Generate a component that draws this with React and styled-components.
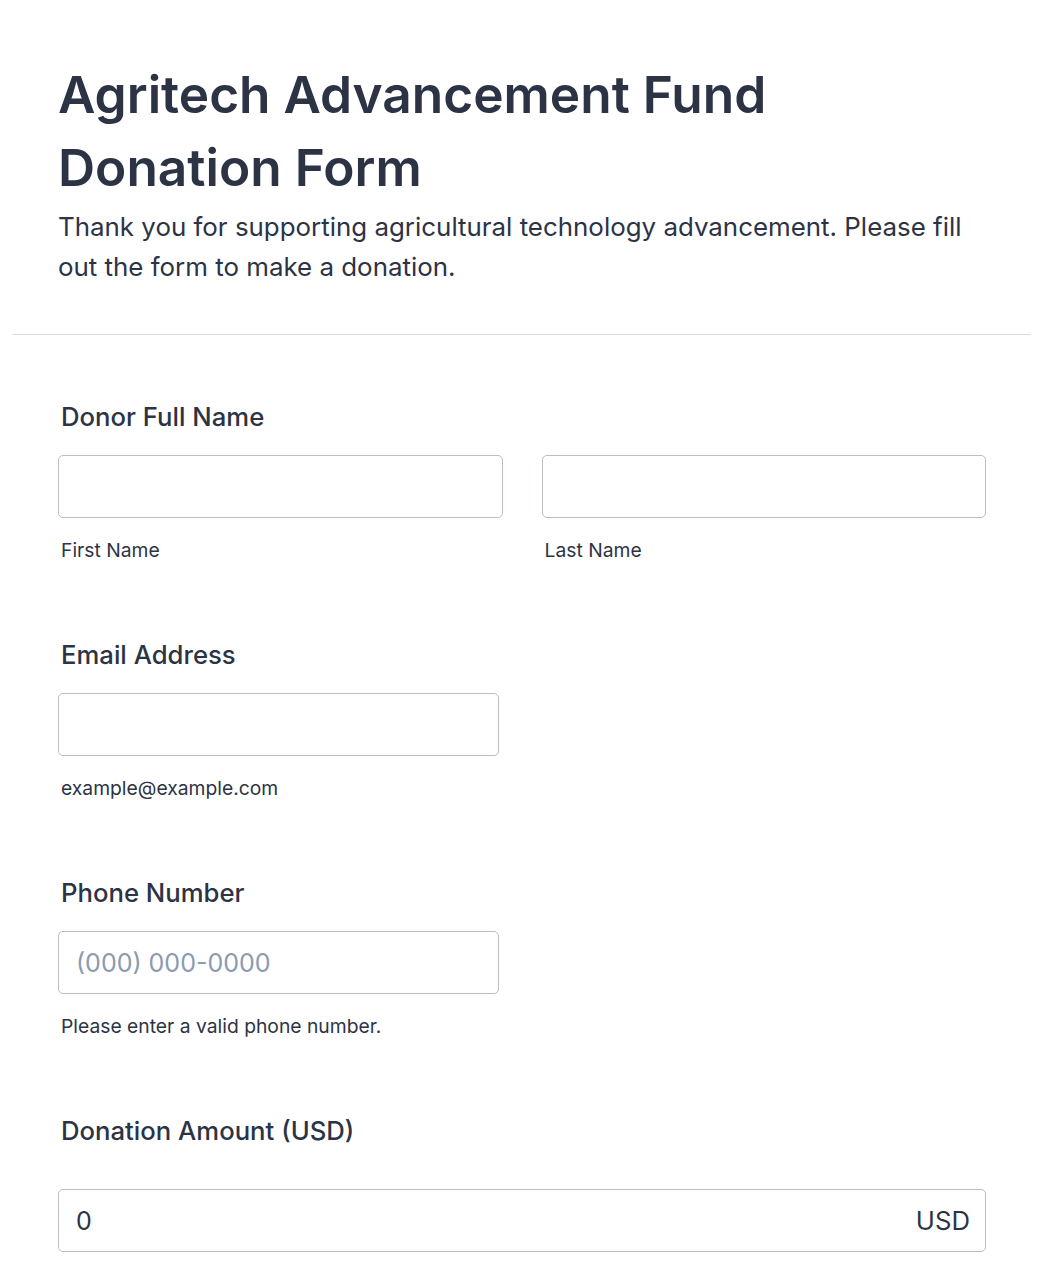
import styled, { createGlobalStyle } from "styled-components";

const GlobalStyle = createGlobalStyle`
  body {
    margin: 0;
    background: #ffffff;
    font-family: Inter, "Noto Sans", sans-serif;
    color: #2c3345;
  }
  * { box-sizing: border-box; }
`;

const Page = styled.div`
  padding: 0 13px;
`;

const Header = styled.header`
  padding: 58px 45px 47px;
  border-bottom: 1px solid #d8dae0;
`;

const Title = styled.h1`
  margin: 0;
  font-size: 51.4px;
  line-height: 73px;
  font-weight: 600;
  color: #2c3345;
  max-width: 780px;
`;

const Subtitle = styled.p`
  margin: 3px 0 0;
  font-size: 25.9px;
  line-height: 40px;
  color: #2c3345;
`;

const Form = styled.form`
  padding: 64px 45px 40px;
  display: flex;
  flex-direction: column;
  gap: 73.5px;
`;

const Field = styled.div`
  display: flex;
  flex-direction: column;
`;

const Label = styled.label`
  font-size: 25.7px;
  line-height: 36px;
  font-weight: 500;
  padding-left: 3px;
  margin-bottom: ${(p) => p.$gap || 20}px;
`;

const Row = styled.div`
  display: grid;
  grid-template-columns: 1fr 1fr;
  gap: 39px;
`;

const Col = styled.div`
  display: flex;
  flex-direction: column;
  width: ${(p) => p.$width || "100%"};
`;

const InputBox = styled.div`
  height: 63px;
  border: 1px solid #b8bdc9;
  border-radius: 5px;
  display: flex;
  align-items: center;
  padding: 0 15px 0 17px;
  background: #fff;
`;

const Input = styled.input`
  flex: 1;
  min-width: 0;
  border: none;
  outline: none;
  background: transparent;
  font-family: inherit;
  font-size: 25px;
  color: #2c3345;
  padding: 0;

  &::placeholder {
    color: #8a9ab0;
  }
`;

const Unit = styled.span`
  font-size: 25.7px;
  color: #2c3345;
`;

const SubLabel = styled.span`
  font-size: 19.3px;
  line-height: 28px;
  margin-top: 17.5px;
  padding-left: 3px;
`;

export default function App() {
  return (
    <Page>
      <GlobalStyle />
      <Header>
        <Title>Agritech Advancement Fund Donation Form</Title>
        <Subtitle>
          Thank you for supporting agricultural technology advancement. Please
          fill out the form to make a donation.
        </Subtitle>
      </Header>
      <Form>
        <Field>
          <Label>Donor Full Name</Label>
          <Row>
            <Col>
              <InputBox>
                <Input type="text" />
              </InputBox>
              <SubLabel>First Name</SubLabel>
            </Col>
            <Col>
              <InputBox>
                <Input type="text" />
              </InputBox>
              <SubLabel>Last Name</SubLabel>
            </Col>
          </Row>
        </Field>
        <Field>
          <Label>Email Address</Label>
          <Col $width="441px">
            <InputBox>
              <Input type="email" />
            </InputBox>
            <SubLabel>example@example.com</SubLabel>
          </Col>
        </Field>
        <Field>
          <Label>Phone Number</Label>
          <Col $width="441px">
            <InputBox>
              <Input type="tel" placeholder="(000) 000-0000" />
            </InputBox>
            <SubLabel>Please enter a valid phone number.</SubLabel>
          </Col>
        </Field>
        <Field>
          <Label $gap={40}>Donation Amount (USD)</Label>
          <InputBox>
            <Input type="text" defaultValue="0" />
            <Unit>USD</Unit>
          </InputBox>
        </Field>
      </Form>
    </Page>
  );
}
